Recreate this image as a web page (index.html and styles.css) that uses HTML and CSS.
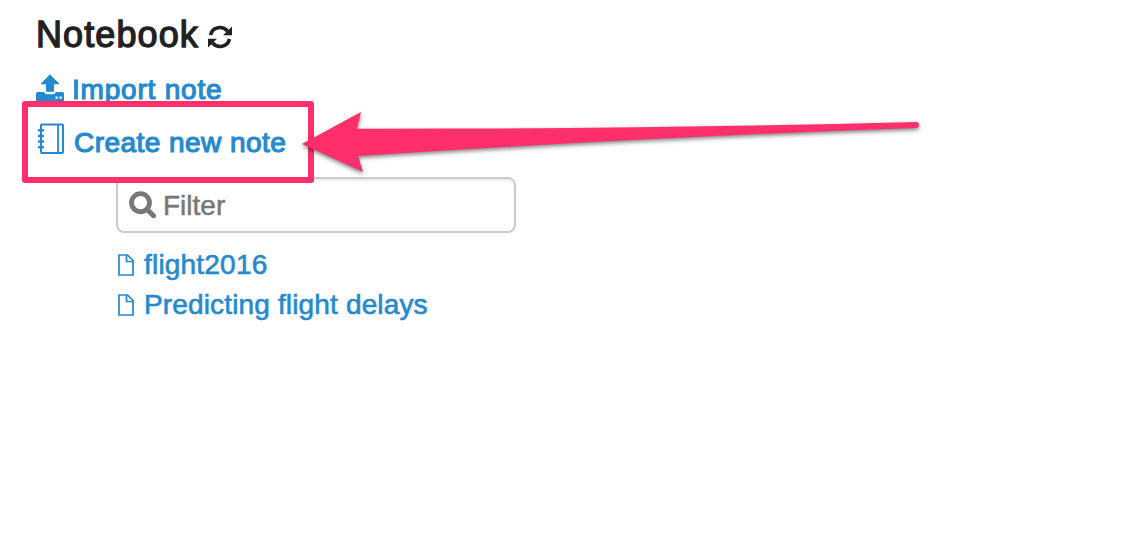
FILE: index.html
```html
<!DOCTYPE html>
<html lang="en">
<head>
<meta charset="utf-8">
<title>Notebook</title>
<link rel="stylesheet" href="styles.css">
</head>
<body>
<main class="panel">
  <h1 class="title"><span>Notebook</span>
    <svg class="refresh" viewBox="0 0 24 24"><g fill="none" stroke="#212121" stroke-width="3.6"><path d="M2.500 10C4.500 1.500 14.500 .5 19.500 6"/><path d="M21.500 14C19.500 22.500 9.500 23.500 4.500 18"/></g><path fill="#212121" d="M24 1.500V10.200H15zM0 22.500V13.800H9z"/></svg>
  </h1>
  <a class="link import" href="#">
    <svg class="upload" viewBox="0 0 28 28"><path fill="#2489ce" stroke="#2489ce" stroke-linejoin="round" d="M14 .8 22.800 9.800H17.600V17.300H10.400V9.800H5.200z"/><path fill="#2489ce" fill-rule="evenodd" d="M1.500 18H8.200Q9 20.300 11 20.300H17Q19 20.300 19.800 18H26.500Q28 18 28 19.500V26.500Q28 28 26.500 28H1.500Q0 28 0 26.500V19.500Q0 18 1.500 18zM19.500 22.500V24.700H21.700V22.500zM23.500 22.500V24.700H25.700V22.500z"/></svg>
    <span>Import note</span>
  </a>
  <a class="link create" href="#">
    <svg class="book" viewBox="0 0 28 32"><g fill="none" stroke="#2489ce" stroke-width="2"><rect x="5" y="1.500" width="22" height="28.500" rx="1"/><path d="M22 1.500V30" stroke-width="1.800"/><path d="M3 7.300H7M3 13H7M3 18.500H7M3 24.200H7" stroke-linecap="round" stroke-width="2.400"/></g></svg>
    <span>Create new note</span>
  </a>
  <div class="notes">
    <div class="filter">
      <svg class="search" viewBox="0 0 28 28"><circle cx="11.500" cy="11.700" r="9" fill="none" stroke="#777" stroke-width="4.800"/><path d="M18.500 18.700 24.500 24.700" stroke="#777" stroke-width="5" stroke-linecap="round"/></svg>
      <span>Filter</span>
    </div>
    <a class="note" href="#"><svg class="file" viewBox="0 0 16 22"><path d="M1 1H9.500L15 6.500V21H1zM8.500 1V7.500H15" fill="none" stroke="#2489ce" stroke-width="1.700"/></svg><span class="flight">flight2016</span></a>
    <a class="note" href="#"><svg class="file" viewBox="0 0 16 22"><path d="M1 1H9.500L15 6.500V21H1zM8.500 1V7.500H15" fill="none" stroke="#2489ce" stroke-width="1.700"/></svg><span class="delays">Predicting flight delays</span></a>
  </div>
</main>
<div class="highlight"></div>
<svg class="arrow" viewBox="0 0 640 80"><path fill="#ff2f6c" d="M2 44 61 12 57 28.700Q350 29 616 22Q619 22 619 25Q619 28 616 28Q350 37 58 56L63 72z"/></svg>
</body>
</html>
```

FILE: styles.css
```css
body {
  position: relative;
  margin: 0;
  width: 1130px;
  height: 542px;
  overflow: hidden;
  background: #fff;
  font-family: "Liberation Sans", Arial, sans-serif;
  font-size: 28px;
}
.panel { padding: 14px 0 0 36px; }
svg { flex: none; display: block; }
a { text-decoration: none; color: #2489ce; }
.title {
  display: flex;
  height: 42px;
  margin: 0;
  font-size: 36px;
  line-height: 42px;
  font-weight: 400;
  letter-spacing: 1.1px;
  color: #212121;
  -webkit-text-stroke: 1.3px #212121;
}
.title span { width: 172px; }
.refresh { width: 24px; height: 24px; margin-top: 11px; }
.link {
  display: flex;
  line-height: 32px;
  -webkit-text-stroke: 1.15px #2489ce;
}
.import { height: 32px; margin-top: 18px; letter-spacing: .8px; }
.upload { width: 28px; height: 28px; margin-right: 8px; }
.create { height: 54px; margin-top: 17px; letter-spacing: .45px; }
.book { width: 28px; height: 32px; margin-right: 10px; }
.create span { margin-top: 4px; }
.notes { margin-left: 80px; width: 400px; }
.filter {
  box-sizing: border-box;
  display: flex;
  height: 56px;
  margin-bottom: 11px;
  padding: 12px 11px;
  border: 2px solid #ccc;
  border-radius: 8px;
  box-shadow: inset 0 2px 2px rgba(0, 0, 0, .075);
  line-height: 30px;
  color: #777;
  -webkit-text-stroke: .5px #777;
}
.search { width: 28px; height: 28px; margin-right: 6px; }
.note {
  display: flex;
  align-items: center;
  height: 40px;
  line-height: 40px;
  -webkit-text-stroke: .6px #2489ce;
}
.note span { padding-top: 2px; }
.file { width: 16px; height: 22px; margin: 1px 10px 0 2px; }
.flight { letter-spacing: .2px; }
.delays { letter-spacing: .15px; white-space: nowrap; }
.highlight {
  position: absolute;
  left: 22px;
  top: 101px;
  box-sizing: border-box;
  width: 292px;
  height: 82px;
  border: 6px solid #ff2f6c;
  border-radius: 3px;
}
.arrow {
  position: absolute;
  left: 300px;
  top: 100px;
  width: 640px;
  height: 80px;
  filter: drop-shadow(0 2px 2px rgba(0, 0, 0, .5));
}
```
